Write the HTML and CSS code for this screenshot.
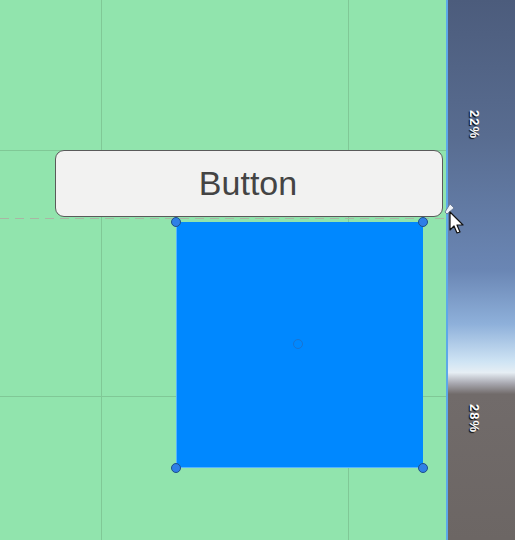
FILE: index.html
```html
<!DOCTYPE html>
<html lang="en">

<head>
    <meta charset="UTF-8">
    <meta name="viewport" content="width=device-width, initial-scale=1.0">
    <title>Scene</title>
    <link rel="stylesheet" href="styles.css">
</head>

<body>
    <div class="editor">
        <!-- Canvas -->
        <div class="scene">
            <div class="grid-line v" style="left: 101px;"></div>
            <div class="grid-line v" style="left: 348px;"></div>
            <div class="grid-line h" style="top: 150px;"></div>
            <div class="grid-line h" style="top: 396px;"></div>

            <div class="ui-button">Button</div>
            <div class="dash-line"></div>

            <div class="image-rect">
                <span class="pivot"></span>
            </div>
            <span class="handle" style="left: 176px; top: 222px;"></span>
            <span class="handle" style="left: 423px; top: 222px;"></span>
            <span class="handle" style="left: 176px; top: 468px;"></span>
            <span class="handle" style="left: 423px; top: 468px;"></span>
        </div>

        <!-- Sky strip -->
        <div class="sky">
            <span class="pct" style="top: 110px;">22%</span>
            <span class="pct" style="top: 404px;">28%</span>
        </div>

        <!-- Mouse cursor over the edge -->
        <svg class="cursor" width="26" height="34" viewBox="0 0 26 34">
            <path d="M6 2 L10 6 L3 12 L1 10 Z" fill="#eef2f8" stroke="#6a7c98" stroke-width="1" />
            <path d="M6 10 L6 28 L10 24 L13 31 L16 30 L13 23 L19 23 Z" fill="#ffffff" stroke="#111" stroke-width="1.2" stroke-linejoin="round" />
        </svg>
    </div>
</body>

</html>
```

FILE: styles.css
```css
/* General Styles */
body {
    margin: 0;
    padding: 0;
    font-family: "Liberation Sans", Arial, sans-serif;
    overflow: hidden;
}

.editor {
    position: relative;
    display: flex;
    width: 515px;
    height: 540px;
}

.scene {
    position: relative;
    width: 446px;
    height: 100%;
    background-color: #91e4ad;
    overflow: hidden;
}

.grid-line {
    position: absolute;
    background-color: #80c896;
}

.grid-line.v {
    top: 0;
    bottom: 0;
    width: 1px;
}

.grid-line.h {
    left: 0;
    right: 0;
    height: 1px;
}

.ui-button {
    position: absolute;
    left: 55px;
    top: 150px;
    width: 386px;
    height: 65px;
    background-color: #f2f2f1;
    border: 1px solid #5a5a5a;
    border-radius: 9px;
    color: #444444;
    font-size: 34px;
    line-height: 65px;
    text-align: center;
    text-indent: -2px;
}

.dash-line {
    position: absolute;
    left: 0;
    top: 218px;
    width: 446px;
    height: 1px;
    background: repeating-linear-gradient(to right, #a9b6a4 0 9px, transparent 9px 15px);
}

.image-rect {
    position: absolute;
    left: 176px;
    top: 222px;
    width: 247px;
    height: 246px;
    background-color: #0088ff;
    border-left: 1px solid #56b4ff;
    border-bottom: 1px solid #56b4ff;
    box-sizing: border-box;
}

.pivot {
    position: absolute;
    left: 116px;
    top: 117px;
    width: 10px;
    height: 10px;
    border: 1px solid #1a74d0;
    border-radius: 50%;
    box-sizing: border-box;
}

.handle {
    position: absolute;
    width: 10px;
    height: 10px;
    margin: -5px 0 0 -5px;
    background-color: #2f7fe6;
    border: 1px solid #1e4f8a;
    border-radius: 50%;
    box-sizing: border-box;
}

.cursor {
    position: absolute;
    left: 444px;
    top: 202px;
    z-index: 2;
}

.sky {
    position: relative;
    flex: 1;
    border-left: 2px solid #5da8e8;
    background: linear-gradient(to bottom,
        #4c5c7c 0%,
        #586c90 25%,
        #6a86b4 50%,
        #8eb0da 60%,
        #cfe4f4 67%,
        #e6eef4 69%,
        #a8a8b0 71%,
        #716b6a 73%,
        #6c6664 100%);
}

.pct {
    position: absolute;
    left: 14px;
    color: #ffffff;
    font-size: 13px;
    font-weight: bold;
    letter-spacing: 1px;
    text-shadow: 1px 1px 1px #000;
    transform: rotate(90deg);
    transform-origin: left top;
    margin-left: 20px;
}
```
